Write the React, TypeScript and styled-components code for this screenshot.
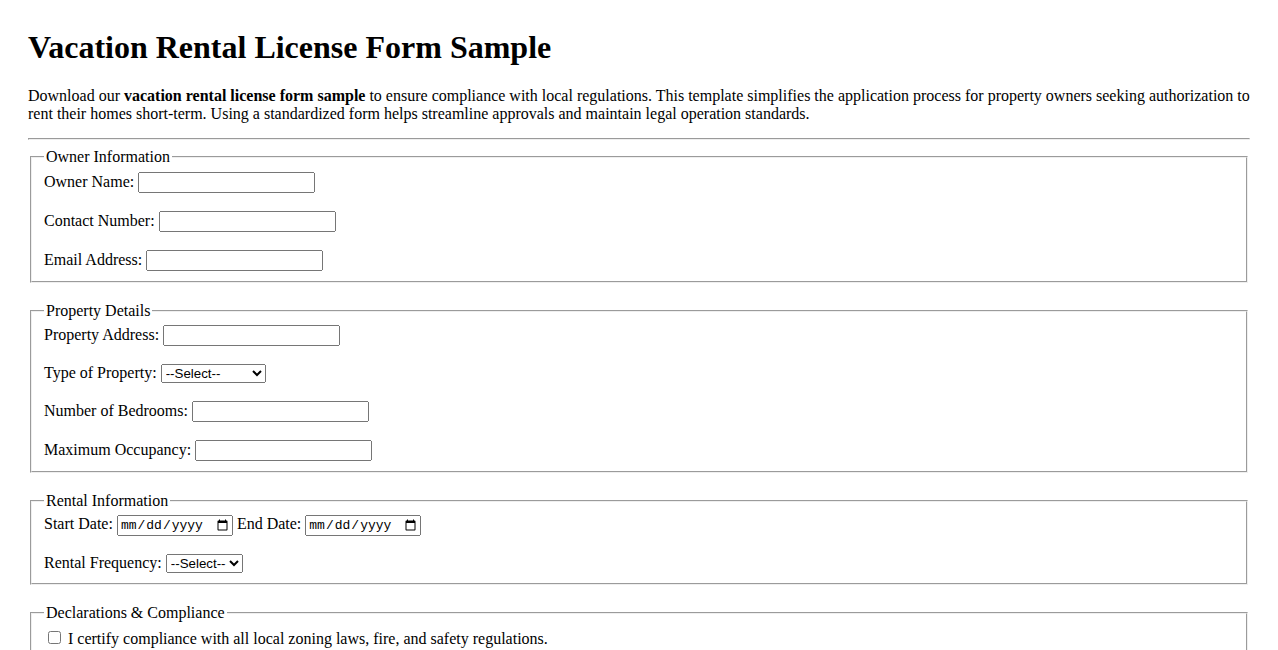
import React from "react";
import styled, { createGlobalStyle } from "styled-components";

const Global = createGlobalStyle`
  html, body { background: #fff; }
  body {
    margin: 0;
    padding: 29px 28px 20px 28px;
    font-family: "Liberation Serif", "Times New Roman", serif;
    font-size: 16px;
    color: #000;
  }
`;

const Title = styled.h1`
  font-size: 32px;
  font-weight: bold;
  margin: 0 0 21.44px 0;
`;

const Intro = styled.p`
  margin: 0 0 15px 0;
  line-height: normal;
`;

const Rule = styled.hr`
  margin: 0 0 8px 0;
`;

const Section = styled.fieldset`
  margin: 0 2px 19px 2px;
  padding: 5.6px 12px 9.6px;
`;

const Legend = styled.legend`
  padding: 0 2px;
`;

const Row = styled.div`
  margin-bottom: 18px;
  &:last-child { margin-bottom: 0; }
`;

const TextInput = styled.input`
  font-family: "Liberation Sans", Arial, sans-serif;
  font-size: 13.333px;
  width: 177px;
  height: 21px;
  box-sizing: border-box;
`;

const DateInput = styled.input`
  font-family: "Liberation Mono", "Courier New", monospace;
  font-size: 13px;
  width: 116px;
  height: 21px;
  box-sizing: border-box;
`;

const Select = styled.select<{ $w: number }>`
  font-family: "Liberation Sans", Arial, sans-serif;
  font-size: 13.333px;
  width: ${(p) => p.$w}px;
  height: 19px;
  box-sizing: border-box;
`;

const CheckLine = styled.label`
  display: block;
`;

const Field = ({ label }: { label: string }) => (
  <Row>
    <label>{label}</label> <TextInput type="text" />
  </Row>
);

export default function App() {
  return (
    <>
      <Global />
      <Title>Vacation Rental License Form Sample</Title>
      <Intro>
        Download our <strong>vacation rental license form sample</strong> to ensure compliance with local
        regulations. This template simplifies the application process for property owners seeking
        authorization to rent their homes short-term. Using a standardized form helps streamline approvals
        and maintain legal operation standards.
      </Intro>
      <Rule />
      <form>
        <Section>
          <Legend>Owner Information</Legend>
          <Field label="Owner Name:" />
          <Field label="Contact Number:" />
          <Field label="Email Address:" />
        </Section>
        <Section>
          <Legend>Property Details</Legend>
          <Field label="Property Address:" />
          <Row>
            <label>Type of Property:</label>{" "}
            <Select $w={105} defaultValue="">
              <option value="">--Select--</option>
              <option>House</option>
              <option>Apartment</option>
              <option>Condominium</option>
            </Select>
          </Row>
          <Field label="Number of Bedrooms:" />
          <Field label="Maximum Occupancy:" />
        </Section>
        <Section>
          <Legend>Rental Information</Legend>
          <Row>
            <label>Start Date:</label> <DateInput type="date" /> <label>End Date:</label>{" "}
            <DateInput type="date" />
          </Row>
          <Row>
            <label>Rental Frequency:</label>{" "}
            <Select $w={77} defaultValue="">
              <option value="">--Select--</option>
              <option>Daily</option>
              <option>Weekly</option>
              <option>Monthly</option>
            </Select>
          </Row>
        </Section>
        <Section>
          <Legend>Declarations &amp; Compliance</Legend>
          <CheckLine>
            <input type="checkbox" /> I certify compliance with all local zoning laws, fire, and safety regulations.
          </CheckLine>
          <CheckLine>
            <input type="checkbox" /> I agree to maintain proper insurance coverage for the rental property.
          </CheckLine>
        </Section>
      </form>
    </>
  );
}
